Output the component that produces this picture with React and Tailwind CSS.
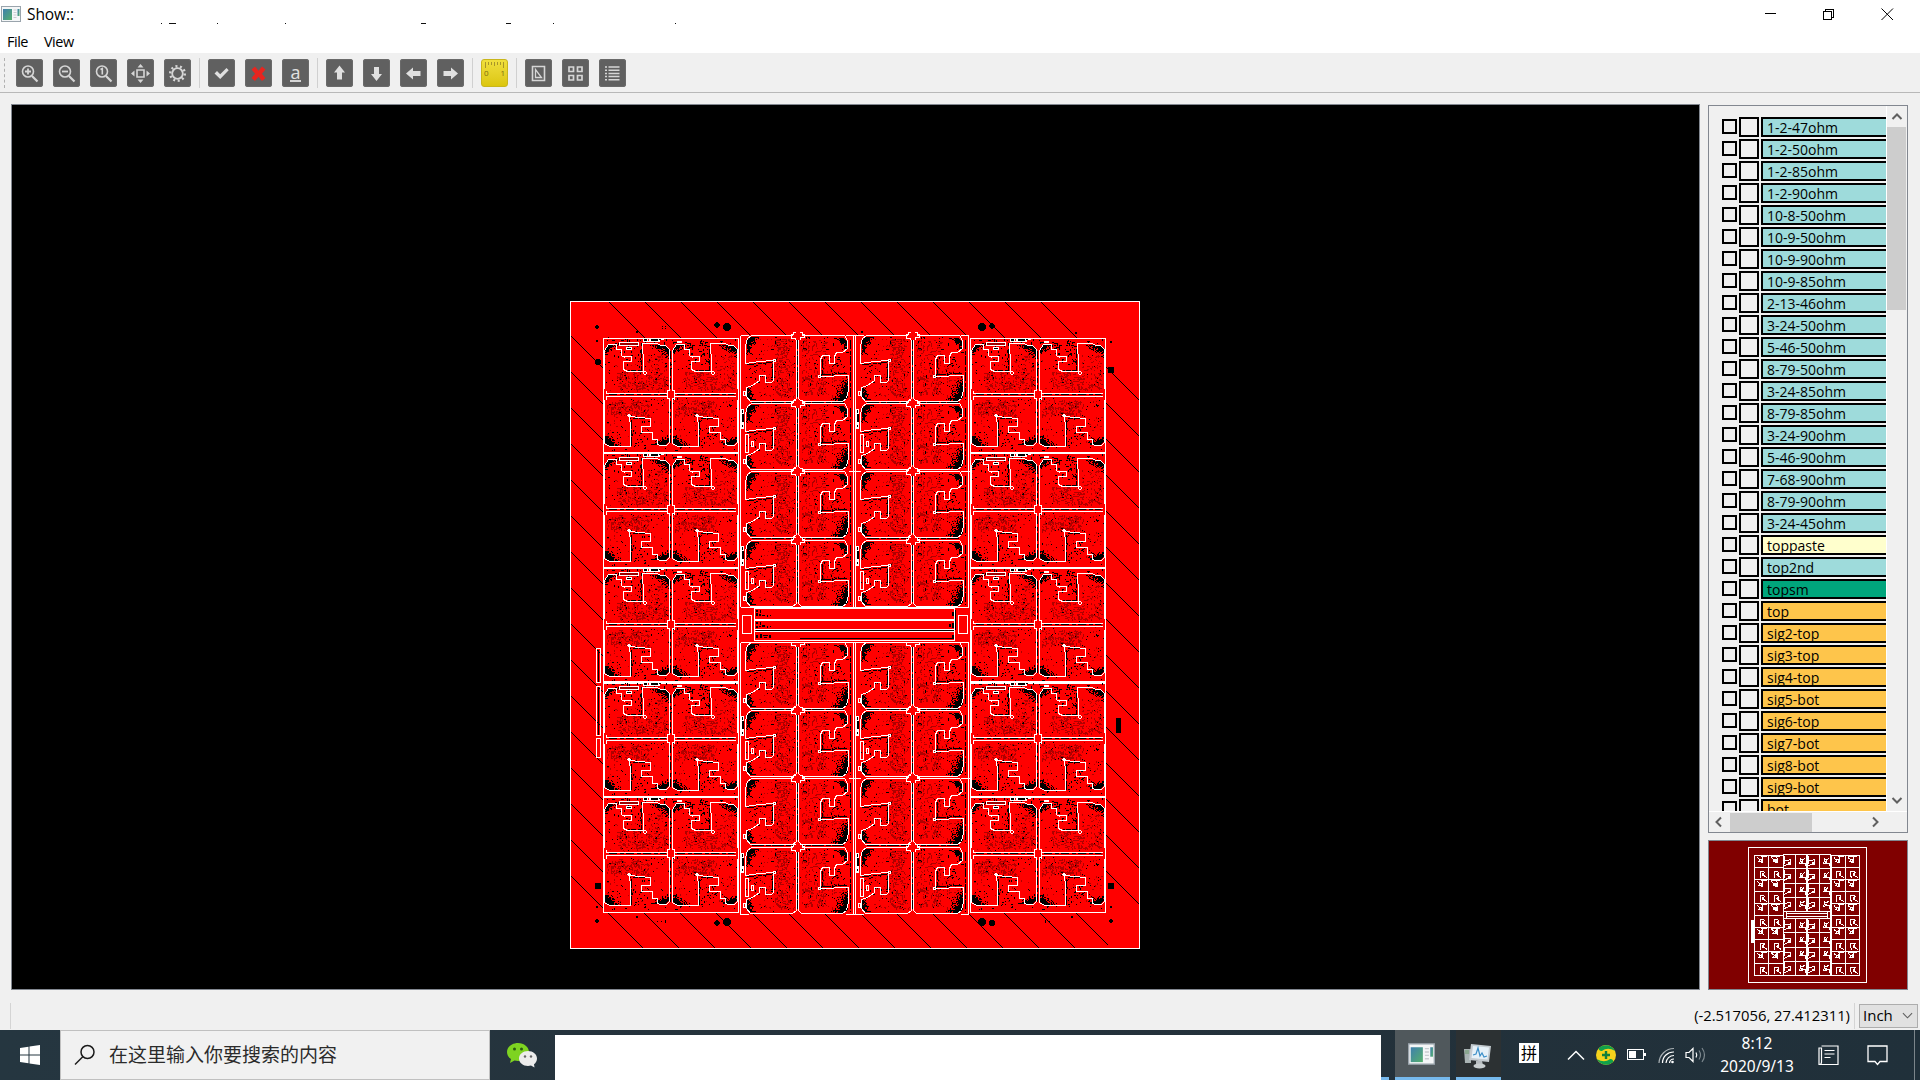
import React from "react";

const TEAL = "bg-[#9edbdb]";
const GOLD = "bg-[#fec54b]";
const LAYERS = [
  ...["1-2-47ohm", "1-2-50ohm", "1-2-85ohm", "1-2-90ohm", "10-8-50ohm", "10-9-50ohm", "10-9-90ohm", "10-9-85ohm", "2-13-46ohm", "3-24-50ohm", "5-46-50ohm", "8-79-50ohm", "3-24-85ohm", "8-79-85ohm", "3-24-90ohm", "5-46-90ohm", "7-68-90ohm", "8-79-90ohm", "3-24-45ohm"].map((n) => [n, TEAL]),
  ["toppaste", "bg-[#ffffcd]"],
  ["top2nd", TEAL],
  ["topsm", "bg-[#00a57c]"],
  ...["top", "sig2-top", "sig3-top", "sig4-top", "sig5-bot", "sig6-top", "sig7-bot", "sig8-bot", "sig9-bot", "bot"].map((n) => [n, GOLD]),
];

/* ---------- board artwork ---------- */

function rng(seed) {
  let s = seed;
  return () => {
    s = (s * 1664525 + 1013904223) % 4294967296;
    return s / 4294967296;
  };
}

// Scatter of single-pixel marks; each zone is [x, y, w, h, count, maxLength].
function scatter(seed, zones) {
  const r = rng(seed);
  let d = "";
  zones.forEach(([x, y, w, h, n, len]) => {
    for (let i = 0; i < n; i++) {
      const l = 1 + Math.floor(r() * len);
      const vert = r() > 0.5;
      const px = x + Math.floor(r() * w);
      const py = y + Math.floor(r() * h);
      d += vert ? `M${px} ${py}h1v${l}h-1z` : `M${px} ${py}h${l}v1h-${l}z`;
    }
  });
  return d;
}

// Dense copper texture hugging a corner; sx/sy give the corner's direction.
function corner(seed, cx, cy, w, h, sx, sy) {
  const r = rng(seed);
  let d = "";
  for (let y = 0; y < h; y++) {
    for (let x = 0; x < w; x++) {
      const k = x / w + y / h;
      const outside = x + y < 3;
      if (!outside && r() < 1.75 - k * 1.6) d += `M${cx + sx * x} ${cy + sy * y}h1v1h-1z`;
    }
  }
  return d;
}

const SIDE_TOP = "M1 50V12L5 6H13V11H18V17L21 19V18H28V23H20V31L24 33H40V21L39 10V5H54L57 7H62L66 11V50";
const SIDE_BOTTOM = "M1 61V105L6 108H27V89L26 78L47 80V88H38V94H49V101H54V106L57 107H63L66 104V61";
const MID_LEFT = "M53 0H12L8 3L6 10V28L20 26L34 25V45L32 47H26V40H20V45L13 50L7 52V61L11 66H53L57 63V3L53 0";
const MID_RIGHT = "M62 0H105L108 5V13L103 17H97L95 21V28H90V20H83L81 24V41L109 40V55L107 63L103 66H62L59 63V3L62 0";

const sideBlack = [
  scatter(7, [[2, 8, 132, 46, 75, 1], [2, 60, 132, 46, 85, 1], [2, 8, 132, 46, 30, 2], [2, 60, 132, 46, 30, 2], [4, 1, 130, 5, 36, 3], [3, 108, 130, 5, 22, 2], [28, 82, 18, 26, 20, 2], [96, 82, 18, 26, 20, 2], [22, 8, 16, 22, 16, 2], [84, 2, 22, 28, 34, 3]]),
  ...[0, 68].map((o) => corner(11 + o, o + 2, 7, 14, 10, 1, 1) + corner(12 + o, o + 65, 7, 20, 12, -1, 1) + corner(13 + o, o + 2, 107, 17, 13, 1, -1) + corner(14 + o, o + 65, 106, 18, 10, -1, -1)),
].join("");
const sideDark = scatter(21, [[14, 34, 50, 18, 170, 3], [82, 34, 50, 18, 170, 3], [4, 62, 42, 16, 150, 3], [72, 62, 42, 16, 150, 3], [44, 16, 20, 18, 40, 2], [112, 16, 20, 18, 40, 2], [2, 20, 130, 86, 130, 2]]);
const midBlack = [
  scatter(31, [[7, 2, 49, 63, 50, 1], [60, 2, 48, 63, 52, 1], [7, 2, 49, 63, 18, 3], [60, 2, 48, 63, 20, 3], [7, 28, 26, 16, 16, 2], [83, 22, 24, 17, 16, 2]]),
  corner(41, 8, 2, 13, 18, 1, 1), corner(42, 8, 64, 9, 15, 1, -1), corner(43, 107, 3, 12, 14, -1, 1), corner(44, 108, 65, 17, 26, -1, -1),
].join("");
const midDark = scatter(51, [[36, 4, 15, 58, 150, 3], [63, 5, 24, 56, 180, 3], [20, 4, 36, 60, 100, 2], [84, 30, 22, 32, 40, 2]]);

const SIDES = [603, 970];
const SIDE_ROWS = [338, 453, 568, 682, 797];
const MID_COLS = [739, 854];
const MID_ROWS = [335, 403, 471, 540, 642, 710, 778, 847];

function SideOutline() {
  return (
    <g fill="none" stroke="#fff">
      <path d="M0 0H135V115H0Z" />
      {[0, 68].map((o) => (
        <g key={o} transform={`translate(${o} 0)`}>
          <path d={SIDE_TOP} />
          <path d={SIDE_BOTTOM} />
          <path d="M3 52V55H64M3 61V58H64" />
        </g>
      ))}
    </g>
  );
}

function SideBlock() {
  return (
    <g>
      <path d={sideDark} fill="#b00000" />
      <path d={sideBlack} fill="#000" />
      <g transform="translate(.5 .5)" fill="none">
        {[0, 68].map((o) => (
          <g key={o} transform={`translate(${o} 0)`}>
            <path d="M38 10V32H24M28 107V80H46" stroke="#000" strokeDasharray="9 2 5 1" />
            <path d="M67 12V50M67 62V104M5 56H62" stroke="#000" strokeDasharray="8 3 4 2" />
          </g>
        ))}
        <SideOutline />
      </g>
      <path d="M64 53h2v-2h4v2h2v7h-2v3h-4v-3h-2z" fill="#f00" />
      <path d="M64 52h2v-2h1v3h-2v7h2v4h-1v-3h-2zM72 52h-2v-2h-1v3h2v7h-2v4h1v-3h2z" fill="#fff" />
      <path d="M16 4h20v4h-20zM23 9h6v3h-6z" fill="#fff" />
      <path d="M17 5h18v2h-18z" fill="#a00000" />
      <path d="M24 10h4v1h-4z" fill="#000" />
      <path d="M40 0h21v2h-4v2h-17zM74 3h5v2h-5z" fill="#fff" />
      <path d="M41 1h3v2h-3zM48 1h7v2h-7zM56 1h2v1h-2z" fill="#000" />
      <path d="M45 1h1v2h-1z" fill="#f00" />
      <path d="M40 34h1v-1h2v1h1v2h-1v1h-2v-1h-1zM108 34h1v-1h2v1h1v2h-1v1h-2v-1h-1zM24 77h1v-1h2v1h1v2h-3zM92 77h1v-1h2v1h1v2h-3z" fill="#fff" />
      <path d="M41 34h2v2h-2zM109 34h2v2h-2z" fill="#f00" />
    </g>
  );
}

function MidBlock({ odd }) {
  return (
    <g>
      <path d={midDark} fill="#b00000" />
      <path d={midBlack} fill="#000" />
      <g transform="translate(.5 .5)" fill="none">
        <path d="M8 29L33 27V44M83 23V39L108 38M58 4V62M111 4V64" stroke="#000" strokeDasharray="9 2 4 1" />
        {!odd && <path d="M12 67H104" stroke="#000" strokeDasharray="12 2 5 1" />}
        <path d={MID_LEFT} stroke="#fff" />
        <path d={MID_RIGHT} stroke="#fff" />
        <circle cx="35" cy="25" r="1" stroke="#fff" />
        <circle cx="80" cy="41" r="1" stroke="#fff" />
        <path d="M4 56H6V60H4Z" stroke="#fff" />
        {odd && <path d="M6 31H9V49H6ZM12 38H14V43H12Z" stroke="#fff" />}
      </g>
      <path d="M54 -2h9v5h-3v2h-3v-2h-3z" fill="#f00" />
      <path d="M52 -1h2v-2h3v1h-2v2h-2v3h4v2h-1v-1h-4zM66 -1h-2v-2h-3v1h2v2h2v2h-4v3h1v-2h4z" fill="#fff" />
      {odd && (
        <>
          <path d="M2 6h3v20h-3z" fill="#fff" />
          <path d="M3 7h1v3h-1zM3 11h2v8h-2zM3 22h1v2h-1z" fill="#000" />
        </>
      )}
    </g>
  );
}

const DIAGONALS = Array.from({ length: 30 }, (_, k) => 739 - 36 * k);
const BLOBS = [
  [717, 325, 2.8], [727, 327, 4.2], [598, 362, 3.3], [597, 327, 1.8], [597, 341, 1.5], [982, 327, 4.2], [992, 326, 2.8], [1111, 370, 3.4], [1111, 342, 1.6],
  [717, 923, 2.8], [727, 922, 4.2], [598, 886, 3.4], [597, 907, 1.4], [597, 921, 1.8], [982, 922, 4.2], [992, 923, 2.9], [1111, 886, 3.4], [1111, 907, 1.6], [1111, 921, 1.8], [637, 332, 1], [862, 332, 1.4], [1076, 333, 1], [637, 917, 1], [1072, 917, 1],
];

function Board() {
  return (
    <svg viewBox="12 105 1687 884" className="block h-full w-full" shapeRendering="crispEdges">
      <defs>
        <clipPath id="margins">
          <path d="M608 302H1078V338H608ZM571 336H604V948H571ZM604 912H1108V948H604ZM1106 367H1139V906H1106Z" />
        </clipPath>
      </defs>
      <rect x="570" y="301" width="570" height="648" fill="#fff" />
      <rect x="571" y="302" width="568" height="646" fill="#f00" />
      <g clipPath="url(#margins)" stroke="#000">
        {DIAGONALS.map((c) => (
          <path key={c} d={`M${c + 302} 302L${c + 948} 948`} />
        ))}
      </g>
      <rect x="603" y="338" width="503" height="574" fill="#f00" />
      <g fill="#000">
        {BLOBS.map(([x, y, r], i) => (
          <circle key={i} cx={x} cy={y} r={r} />
        ))}
        <path d="M662 326h1v1h-1zM665 326h1v1h-1zM662 328h1v1h-1zM665 328h1v1h-1zM657 921h1v1h-1zM661 921h1v1h-1zM665 920h1v3h-1zM1045 920h1v3h-1zM1049 921h1v2h-1zM1116 718h5v15h-5z" />
      </g>
      {SIDES.map((x) => SIDE_ROWS.map((y) => (
        <g key={`${x}-${y}`} transform={`translate(${x} ${y})`}>
          <SideBlock />
        </g>
      )))}
      <path d="M603 452h136v2h-136zM603 567h136v2h-136zM603 681h136v2h-136zM603 796h136v2h-136zM970 452h136v2h-136zM970 567h136v2h-136zM970 681h136v2h-136zM970 796h136v2h-136z" fill="#fff" />
      <rect x="740" y="335" width="229" height="579" fill="#f00" />
      {MID_COLS.map((x) => MID_ROWS.map((y, i) => (
        <g key={`${x}-${y}`} transform={`translate(${x} ${y})`}>
          <MidBlock odd={i % 2 === 1} />
        </g>
      )))}
      <g fill="none" stroke="#fff" transform="translate(.5 .5)">
        <path d="M740 335V607M740 642V914M853 335V607M853 642V914M855 335V607M855 642V914M968 335V607M968 642V914M740 335H748M845 335H863M960 335H968M740 914H748M845 914H863M960 914H968M740 642H750M845 642H863M960 642H968M848 471H860M960 471H970M848 778H860M960 778H970" />
      </g>
      <rect x="739" y="607" width="231" height="35" fill="#f00" />
      <g fill="none" stroke="#fff" transform="translate(.5 .5)">
        <path d="M742 615H751V633H742ZM958 615H967V633H958ZM754 608H954V640H754ZM754 629H954M754 631H954M740 642H968M740 607H968" />
        <path d="M754 619H954" strokeWidth="2" />
        <path d="M755 630H953M955 609V629M799 638H953" stroke="#000" />
      </g>
      <path d="M756 610h2v2h-2zM760 610h1v3h-1zM756 613h2v3h-2zM759 614h2v2h-2zM762 615h3v1h-3zM767 615h1v2h-1zM770 615h1v1h-1zM756 622h2v2h-2zM760 622h1v3h-1zM756 626h2v2h-2zM759 626h2v1h-2zM762 625h3v2h-3zM767 626h1v2h-1zM770 626h1v1h-1zM756 635h2v3h-2zM760 634h2v4h-2zM763 635h5v1h-5zM764 637h3v1h-3zM769 635h2v3h-2zM952 612h2v4h-2zM949 624h2v3h-2zM952 623h2v5h-2zM952 635h2v3h-2z" fill="#000" />
      <g fill="none" stroke="#fff" transform="translate(.5 .5)">
        <path d="M596 648H600V682H596ZM596 686H600V735H596ZM596 738H600V757H596Z" />
        <path d="M598 649V681M598 687V734" stroke="#000" />
      </g>
    </svg>
  );
}

function Overview() {
  return (
    <svg viewBox="1709 841 198 148" className="block h-full w-full" shapeRendering="crispEdges">
      <path d="M1748.500 847.500H1866.500V982.500H1748.500Z" fill="none" stroke="#fff" />
      <g transform="translate(1628.8 784.8) scale(.2087)" fill="none" stroke="#fff">
        {SIDES.map((x) => SIDE_ROWS.map((y) => (
          <g key={`${x}-${y}`} transform={`translate(${x} ${y})`}>
            <path d="M0 0H136V115H0Z" vectorEffect="non-scaling-stroke" />
            <path d="M68 0V115M0 57H136" vectorEffect="non-scaling-stroke" />
            {[0, 68].map((o) => (
              <path key={o} transform={`translate(${o} 0)`} d="M13 7L18 17L28 20L20 31L40 33L39 7H54M27 108L26 78L47 80L38 94L50 101L60 107" vectorEffect="non-scaling-stroke" />
            ))}
            <path d="M30 3H60M80 3H110" strokeWidth="11" />
            <path d="M36 16V30M104 16V30M42 84V100M110 84V100" strokeWidth="9" />
          </g>
        )))}
        {MID_COLS.map((x) => MID_ROWS.map((y) => (
          <g key={`${x}-${y}`} transform={`translate(${x} ${y})`}>
            <path d="M0 0H113V68H0ZM58 0V68" vectorEffect="non-scaling-stroke" />
            <path d="M6 28L34 25V45H24L13 50L6 54M103 17L95 26L83 20L81 41L109 40V55" vectorEffect="non-scaling-stroke" />
            <path d="M4 4V44" strokeWidth="9" />
            <path d="M24 40H34M84 34H96" strokeWidth="9" />
          </g>
        )))}
        <rect x="742" y="606" width="224" height="37" fill="#800000" stroke="none" />
        <path d="M754 608H954V640H754ZM754 619H954M754 630H954M742 606H966V640H742Z" vectorEffect="non-scaling-stroke" />
        <path d="M592 648V757" strokeWidth="12" />
      </g>
    </svg>
  );
}

/* ---------- toolbar ---------- */

const glyphs = {
  zoomIn: (
    <g fill="none" stroke="#d6d6d6">
      <circle cx="12" cy="11.500" r="5.500" strokeWidth="1.600" />
      <path d="M16 16L21.500 21.500" strokeWidth="2.200" />
      <path d="M9 11.500H15M12 8.500V14.500" strokeWidth="1.800" />
    </g>
  ),
  zoomOut: (
    <g fill="none" stroke="#d6d6d6">
      <circle cx="12" cy="11.500" r="5.500" strokeWidth="1.600" />
      <path d="M16 16L21.500 21.500" strokeWidth="2.200" />
      <path d="M9 11.500H15" strokeWidth="1.800" />
    </g>
  ),
  zoomOne: (
    <g fill="none" stroke="#d6d6d6">
      <circle cx="12" cy="11.500" r="5.500" strokeWidth="1.600" />
      <path d="M16 16L21.500 21.500" strokeWidth="2.200" />
      <path d="M10.500 9.500L12.300 8.500V14.500" strokeWidth="1.600" />
    </g>
  ),
  fit: (
    <g fill="#d6d6d6">
      <path d="M10 10h7v7h-7z" fill="none" stroke="#d6d6d6" strokeWidth="1.600" />
      <path d="M13.500 4l3 3.500h-6zM13.500 23l3-3.500h-6zM4 13.500l3.500-3v6zM23 13.500l-3.500-3v6z" />
    </g>
  ),
  gear: (
    <g fill="none" stroke="#d6d6d6">
      <circle cx="13.500" cy="13.500" r="5.300" strokeWidth="1.800" />
      <circle cx="13.500" cy="13.500" r="7.300" strokeWidth="2.400" strokeDasharray="2 2.587" />
    </g>
  ),
  check: <path d="M6.500 13.500L9 11l3.200 3.300L18.500 8l2.200 2.200L12.200 19z" fill="#e0e0e0" />,
  cross: <path d="M6.500 9.500l3.500-3 3.500 4.300L17 6.500l3.500 3-3.600 4.200L20.500 18l-3.500 3-3.500-4.200L10 21l-3.500-3 3.600-4.300z" fill="#e8251f" />,
  up: <path d="M13.500 5.500l5.500 7h-3v7h-5v-7h-3z" fill="#e0e0e0" />,
  down: <path d="M13.500 21l5.500-7h-3v-7h-5v7h-3z" fill="#e0e0e0" />,
  left: <path d="M6 13.500l7-6v3.500h7.500v5h-7.500v3.500z" fill="#e0e0e0" />,
  right: <path d="M21 13.500l-7-6v3.500h-7.500v5h7.500v3.500z" fill="#e0e0e0" />,
  measure: (
    <g fill="none" stroke="#d6d6d6">
      <path d="M7.500 6.500h12v14h-12z" strokeWidth="1.600" />
      <path d="M10.500 9.500v8h6z" strokeWidth="1.300" />
    </g>
  ),
  grid: <path d="M7 7h4.500v4.500h-4.500zM15.500 7h4.500v4.500h-4.500zM7 15.500h4.500v4.500h-4.500zM15.500 15.500h4.500v4.500h-4.500z" fill="none" stroke="#d6d6d6" strokeWidth="1.700" />,
  list: <path d="M6 7h2M9.500 7h11M6 10.200h2M9.500 10.200h11M6 13.400h2M9.500 13.400h11M6 16.600h2M9.500 16.600h11M6 19.800h2M9.500 19.800h11" stroke="#d6d6d6" strokeWidth="1.500" />,
};

const TOOL_GROUPS = [
  ["zoomIn", "zoomOut", "zoomOne", "fit", "gear"],
  ["check", "cross", "text"],
  ["up", "down", "left", "right"],
  ["ruler"],
  ["measure", "grid", "list"],
];

function ToolButton({ name }) {
  if (name === "ruler") {
    return (
      <div className="relative h-7 w-[27px] rounded-[3px] border border-[#c9b61c] bg-gradient-to-b from-[#f0df3c] to-[#dcc60c]">
        <svg viewBox="0 0 27 28" className="absolute -left-px -top-px h-7 w-[27px]">
          <path d="M4.500 3v6M7.500 3v3M10.500 3v3M13.500 3v4M16.500 3v3M19.500 3v3M22.500 3v6" stroke="#a8962a" />
        </svg>
        <div className="flex justify-between px-0.5 pt-2 text-[8px] leading-[10px] text-[#7a6c10]"><span>0</span><span>1</span></div>
      </div>
    );
  }
  return (
    <div className="flex h-7 w-[27px] items-center justify-center rounded-[3px] bg-[#606060] shadow-[inset_0_0_0_1px_#6a6a6a]">
      {name === "text" ? (
        <span className="border-b-2 border-[#d6d6d6] text-[18px] leading-[16px] text-[#e0e0e0]">a</span>
      ) : (
        <svg viewBox="0 0 27 27" className="h-[27px] w-[27px]">{glyphs[name]}</svg>
      )}
    </div>
  );
}

function AppIcon({ className }) {
  return (
    <svg viewBox="0 0 20 16" className={className}>
      <defs>
        <linearGradient id="pane" x1="0" y1="0" x2="1" y2="1">
          <stop offset="0" stopColor="#3f7fae" />
          <stop offset="1" stopColor="#55b06c" />
        </linearGradient>
      </defs>
      <rect x=".5" y=".5" width="19" height="15" fill="#f4f6f7" stroke="#9aa4ac" />
      <rect x="2" y="3" width="9" height="11" fill="url(#pane)" />
      <path d="M12.500 4h3M12.500 6.500h3M12.500 9h3M12.500 11.500h3" stroke="#c8ccd0" />
      <rect x="16.500" y="3" width="2" height="7" fill="url(#pane)" />
    </svg>
  );
}

function Chevron({ d, className = "h-3 w-3", width = 2, color = "#606060" }) {
  return (
    <svg viewBox="0 0 12 12" className={className}>
      <path d={d} fill="none" stroke={color} strokeWidth={width} />
    </svg>
  );
}

function TitleBar() {
  return (
    <header className="relative flex h-7 shrink-0 items-center bg-white pl-px">
      <AppIcon className="h-4 w-5" />
      <span className="ml-1.5 pt-0.5 text-[15.500px] tracking-[-0.1px]">Show::</span>
      <svg viewBox="0 0 700 3" className="absolute left-0 top-[22px] h-[3px] w-[700px]" shapeRendering="crispEdges">
        <path d="M161 1h1v1h-1zM169 1h7v1h-7zM217 1h1v1h-1zM285 1h1v1h-1zM421 1h5v1h-5zM506 1h5v1h-5zM553 1h1v1h-1zM675 1h1v1h-1z" fill="#111" />
      </svg>
      <svg viewBox="0 0 140 28" className="ml-auto mr-[15px] h-7 w-[140px]" fill="none" stroke="#000">
        <path d="M0 13.500H11" shapeRendering="crispEdges" />
        <path d="M58.500 11.500h8v8h-8zM60.500 11.500v-2h8v8h-2" shapeRendering="crispEdges" />
        <path d="M116.500 8.500l11.500 11.500M128 8.500L116.500 20" />
      </svg>
    </header>
  );
}

function LayerPanel() {
  return (
    <section className="flex h-[728px] w-[200px] flex-col border border-[#828790]">
      <div className="flex h-[705px] shrink-0">
        <div className="flex w-[177px] flex-col gap-0.5 overflow-hidden pl-[13px] pt-[11px]">
          {LAYERS.map(([name, color]) => (
            <div key={name} className="flex h-5 w-[200px] shrink-0 gap-0.5">
              <span className="mt-0.5 h-[15px] w-[15px] shrink-0 border-2 border-black" />
              <span className="h-5 w-5 shrink-0 border-2 border-black" />
              <span className={`h-5 flex-1 overflow-hidden border-2 border-black pl-1 text-[14px] leading-[17px] ${color}`}>{name}</span>
            </div>
          ))}
        </div>
        <div className="flex w-[21px] flex-col items-center border-l border-white bg-[#f0f0f0] pr-px">
          <div className="flex h-[21px] items-center"><Chevron d="M1.500 8L6 3.500L10.500 8" /></div>
          <div className="h-[183px] w-[19px] bg-[#cdcdcd]" />
          <div className="mt-auto flex h-[21px] items-center"><Chevron d="M1.500 3L6 7.500L10.500 3" /></div>
        </div>
      </div>
      <div className="flex flex-1 items-center border-t border-white">
        <div className="flex w-[21px] justify-center pr-0.5"><Chevron d="M8 1.500L3.500 6L8 10.500" /></div>
        <div className="h-[19px] w-[82px] bg-[#cdcdcd]" />
        <div className="ml-auto mr-[26px]"><Chevron d="M4 1.500L8.500 6L4 10.500" /></div>
      </div>
    </section>
  );
}

function Taskbar() {
  return (
    <footer className="flex h-[50px] shrink-0 bg-gradient-to-r from-[#253640] via-[#25323b] to-[#20303a] text-white">
      <div className="flex w-[60px] items-center justify-center">
        <svg viewBox="0 0 20 20" className="h-5 w-5" fill="#fff">
          <path d="M0 3l8.500-1.200v7.700h-8.500zM9.500 1.600L20 0v9.500h-10.500zM0 10.500h8.500v7.700L0 17zM9.500 10.500H20V20L9.500 18.400z" />
        </svg>
      </div>
      <div className="flex w-[430px] items-center border border-[#c0c0c0] bg-[#f1f1f1] pl-[13px]">
        <svg viewBox="0 0 22 22" className="h-[22px] w-[22px]" fill="none" stroke="#1a1a1a" strokeWidth="1.500">
          <circle cx="13.500" cy="8" r="6.500" />
          <path d="M9 12.500L1 20.500" />
        </svg>
        <span className="ml-[13px] text-[19px] text-[#2b2b2b]">在这里输入你要搜索的内容</span>
      </div>
      <div className="flex w-[65px] items-center justify-center pr-0.5">
        <svg viewBox="0 0 30 26" className="h-[26px] w-[30px]">
          <path d="M11 1C5 1 0 5 0 10c0 3 1.500 5.300 4 7L3 21l4.500-2.500c1 .3 2.300.5 3.500.5 6 0 11-4 11-9S17 1 11 1z" fill="#7ed321" />
          <circle cx="7.500" cy="7" r="1.500" fill="#2b5a10" />
          <circle cx="14.500" cy="7" r="1.500" fill="#2b5a10" />
          <path d="M21 9c-5 0-9 3.300-9 7.500S16 24 21 24c1 0 2-.1 3-.4L27.500 25.500 27 22.300c1.800-1.400 3-3.400 3-5.800C30 12.300 26 9 21 9z" fill="#ececec" />
          <circle cx="18" cy="14.500" r="1.200" fill="#666" />
          <circle cx="24" cy="14.500" r="1.200" fill="#666" />
        </svg>
      </div>
      <div className="mt-[5px] w-[826px] bg-white" />
      <div className="w-2 self-end border-b-[3px] border-[#76b9ed]" />
      <div className="ml-1.5 flex w-[55px] items-center justify-center border-b-[3px] border-[#76b9ed] bg-[#50585c] pr-0.5">
        <AppIcon className="h-[22px] w-[27px]" />
      </div>
      <div className="ml-1.5 flex w-[45px] items-center justify-center border-b-[3px] border-[#76b9ed] bg-[#2c3133] pr-0.5 pt-1">
        <svg viewBox="0 0 28 26" className="h-[26px] w-7">
          <path d="M0 6h7v14H1z" fill="#a9b3b3" />
          <path d="M1 8h4M1 10h4" stroke="#6c9a6c" />
          <path d="M7 1l20 2-2 16L5 17z" fill="#c4cbd0" />
          <path d="M9 3l16 1.500-1.500 12L7.500 15z" fill="#e6f1f8" />
          <path d="M9 12l3-1 2-6 2 8 2-3 2 4 3-1" fill="none" stroke="#3c8fc8" strokeWidth="1.200" />
          <path d="M12 18h6l1 4h-7z" fill="#b6bcc0" />
          <ellipse cx="15.500" cy="23" rx="6" ry="2.500" fill="#c8ced0" />
        </svg>
      </div>
      <div className="ml-[18px] mt-[13px] flex h-5 w-5 items-center justify-center bg-white text-[16px] leading-none text-black">拼</div>
      <div className="ml-7 flex items-center">
        <svg viewBox="0 0 18 12" className="h-3 w-[18px]" fill="none" stroke="#fff" strokeWidth="1.500"><path d="M1 10.500L9 2.500L17 10.500" /></svg>
        <svg viewBox="0 0 20 20" className="ml-[11px] h-5 w-5">
          <circle cx="10" cy="10" r="10" fill="#f6d31c" />
          <path d="M2.500 3.500A10 10 0 0 1 19 6c-5-3-9-3-13 0-2 .5-3-1-3.500-2.500zM17.500 16.500A10 10 0 0 1 1 14c5 3 9 3 13 0 2-.5 3 1 3.500 2.500z" fill="#12a04a" />
          <path d="M10 6v8M6 10h8" stroke="#12803c" strokeWidth="2.400" />
        </svg>
        <svg viewBox="0 0 20 12" className="ml-[11px] h-3 w-5" shapeRendering="crispEdges">
          <path d="M.5 .5h16v10h-16z" fill="none" stroke="#fff" />
          <path d="M2 2h7v7h-7zM17 4h2v3h-2z" fill="#fff" />
        </svg>
        <svg viewBox="0 0 17 17" className="ml-[11px] h-[17px] w-[17px]" fill="none" stroke="#fff" strokeWidth="1.200">
          <path d="M1 16A15 15 0 0 1 16 1.500" stroke="#aab1b5" />
          <path d="M4.500 16A11 11 0 0 1 16 5M8 16a8 8 0 0 1 8-7.500M11.500 16a4.500 4.500 0 0 1 4.500-4" />
          <circle cx="14.500" cy="15" r="1.300" fill="#fff" stroke="none" />
        </svg>
        <svg viewBox="0 0 22 18" className="ml-[10px] h-[18px] w-[22px]" fill="none" stroke="#fff" strokeWidth="1.200">
          <path d="M1 6.500h3L8 2.500v13l-4-4H1zM11 6.500q1.500 2.500 0 5" />
          <path d="M14 4.500q3 4.500 0 9M17 2q5 7 0 14" stroke="#7d888e" />
        </svg>
      </div>
      <div className="ml-3 flex w-[76px] flex-col items-center justify-center whitespace-nowrap font-['Noto_Sans',sans-serif] text-[15.500px] leading-[23px]">
        <span>8:12</span>
        <span>2020/9/13</span>
      </div>
      <div className="ml-[23px] flex items-center">
        <svg viewBox="0 0 21 21" className="h-[21px] w-[21px]" fill="none" stroke="#fff" strokeWidth="1.200">
          <path d="M3.500 1h16.500v18.500H1V3h2.500v14q0 2.500-2 2.500M6.500 5.500h10M6.500 9h10M6.500 12.500h6" />
        </svg>
        <svg viewBox="0 0 21 21" className="ml-7 h-[21px] w-[21px]" fill="none" stroke="#fff" strokeWidth="1.300">
          <path d="M1 1h19v15.500h-7L10.500 19.500 8 16.500H1z" />
        </svg>
      </div>
      <div className="ml-auto mr-[5px] w-px bg-[#7b858a]" />
    </footer>
  );
}

export default function App() {
  return (
    <div className="flex h-[1080px] w-[1920px] flex-col overflow-hidden bg-[#f0f0f0] font-['Open_Sans','Noto_Sans_CJK_SC',sans-serif] text-black">
      <TitleBar />
      <nav className="flex h-[26px] shrink-0 items-center gap-4 border-b border-[#f0f0f0] bg-white pl-[7px] pt-0.5 text-[14.500px] tracking-[-0.5px]">
        <span>File</span>
        <span>View</span>
      </nav>
      <div className="flex h-[39px] shrink-0 items-center border-b border-[#b8b8b8] pl-1">
        <div className="mr-[11px] h-[30px] border-l border-dashed border-[#b0b0b0]" />
        {TOOL_GROUPS.map((group, i) => (
          <React.Fragment key={i}>
            {i > 0 && <div className="mx-2 h-[30px] w-px bg-[#d0d0d0]" />}
            <div className="flex gap-2.5">
              {group.map((name) => (
                <ToolButton key={name} name={name} />
              ))}
            </div>
          </React.Fragment>
        ))}
      </div>
      <main className="flex h-[897px] shrink-0 pl-[11px] pt-[11px]">
        <section className="h-[886px] w-[1689px] border border-[#828790] bg-black">
          <Board />
        </section>
        <aside className="ml-2 mt-px flex flex-col">
          <LayerPanel />
          <div className="mt-[7px] h-[150px] w-[200px] border border-[#828790] bg-[#800000]">
            <Overview />
          </div>
        </aside>
      </main>
      <div className="flex flex-1 items-center pl-[10px] pt-[11px]">
        <div className="h-[26px] w-px bg-[#d4d4d4]" />
        <span className="ml-auto text-[14.800px]">(-2.517056, 27.412311)</span>
        <div className="ml-1 h-[26px] w-px bg-[#d4d4d4]" />
        <div className="ml-1 mr-0.5 flex h-6 w-[59px] items-center border border-[#adadad] bg-[#e1e1e1] pl-[3px] text-[15px]">
          Inch
          <Chevron d="M1 3.500L6 8.500L11 3.500" className="ml-auto mr-1 h-[11px] w-[11px]" width={1.2} />
        </div>
      </div>
      <Taskbar />
    </div>
  );
}
